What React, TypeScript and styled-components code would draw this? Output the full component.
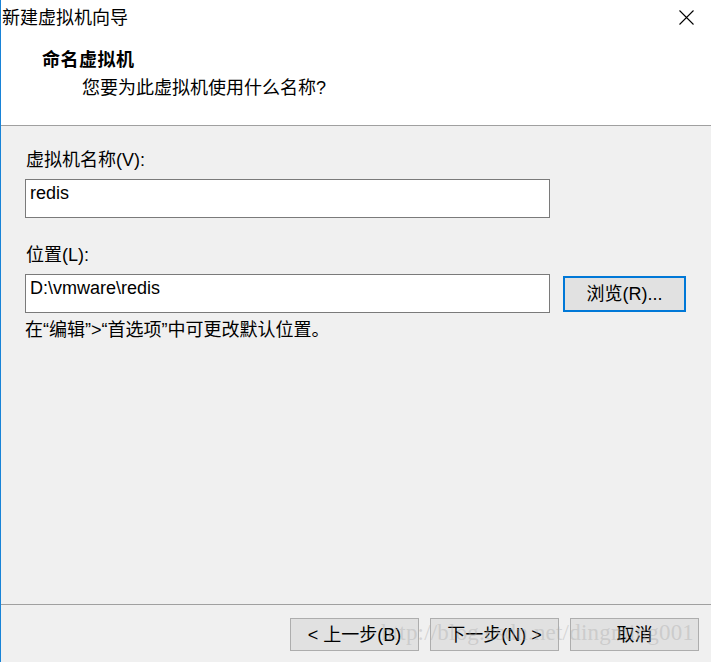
import React from 'react'
import styled, { createGlobalStyle } from 'styled-components'

const GlobalStyle = createGlobalStyle`
html, body {
    margin: 0;
    padding: 0;
    background: #f0f0f0;
}
* {
    box-sizing: border-box;
}
`;

const FONT = `"Liberation Sans", "Noto Sans CJK SC", sans-serif`;

const Window = styled.div`
    position: relative;
    width: 711px;
    height: 662px;
    display: flex;
    flex-direction: column;
    background: #f0f0f0;
    border-left: 1px solid #1883d7;
    font-family: ${FONT};
    font-size: 18px;
    color: #000;
    overflow: hidden;
`;

const Header = styled.div`
    background: #fff;
    height: 126px;
    border-bottom: 1px solid #a0a0a0;
    display: flex;
    flex-direction: column;
`;

const TitleBar = styled.div`
    height: 36px;
    display: flex;
    align-items: center;
    justify-content: space-between;
    padding-left: 1px;
    padding-right: 17px;
`;

const Title = styled.span`
    line-height: 36px;
`;

const Close = styled.div`
    width: 15px;
    height: 15px;
    margin-top: -2px;
    display: flex;
    svg {
        display: block;
    }
`;

const Heading = styled.div`
    margin-top: 12px;
    margin-left: 41px;
    font-weight: bold;
    letter-spacing: 0.5px;
    line-height: 24px;
`;

const SubHeading = styled.div`
    margin-top: 4px;
    margin-left: 81px;
    line-height: 24px;
`;

const Body = styled.div`
    flex: 1;
    padding: 22px 0 0 24px;
    display: flex;
    flex-direction: column;
`;

const Label = styled.div<{ top?: number }>`
    margin-top: ${({ top }) => (top ? top : 0)}px;
    padding-left: 1px;
    line-height: 24px;
`;

const Row = styled.div`
    display: flex;
    align-items: center;
    gap: 13px;
    margin-top: 7px;
`;

const Field = styled.div`
    width: 525px;
    height: 39px;
    background: #fff;
    border: 1px solid #7a7a7a;
    padding: 1px 0 0 4px;
    line-height: 24px;
    white-space: nowrap;
`;

const Button = styled.div<{ focused?: boolean }>`
    width: ${({ focused }) => (focused ? '123px' : '129px')};
    height: ${({ focused }) => (focused ? '36px' : '33px')};
    background: #e1e1e1;
    border: ${({ focused }) => (focused ? '2px solid #0078d7' : '1px solid #adadad')};
    display: flex;
    align-items: center;
    justify-content: center;
    line-height: 24px;
    white-space: nowrap;
`;

const Hint = styled.div`
    margin-top: 5px;
    line-height: 24px;
`;

const Footer = styled.div`
    height: 58px;
    border-top: 1px solid #a0a0a0;
    padding: 13px 12px 0 0;
    display: flex;
    justify-content: flex-end;
    gap: 11px;
`;

const Watermark = styled.div`
    position: absolute;
    left: 380px;
    top: 620px;
    font-family: "Liberation Serif", serif;
    font-size: 23px;
    letter-spacing: 0.2px;
    color: rgba(170, 170, 170, 0.4);
    white-space: nowrap;
    pointer-events: none;
`;

export default function App() {
    return (
        <>
            <GlobalStyle />
            <Window>
                <Header>
                    <TitleBar>
                        <Title>新建虚拟机向导</Title>
                        <Close>
                            <svg width="15" height="15" viewBox="0 0 15 15">
                                <path d="M0.5 0.5 L14.5 14.5 M14.5 0.5 L0.5 14.5" stroke="#000" strokeWidth="1.1" fill="none" />
                            </svg>
                        </Close>
                    </TitleBar>
                    <Heading>命名虚拟机</Heading>
                    <SubHeading>您要为此虚拟机使用什么名称?</SubHeading>
                </Header>
                <Body>
                    <Label>虚拟机名称(V):</Label>
                    <Row>
                        <Field>redis</Field>
                    </Row>
                    <Label top={25}>位置(L):</Label>
                    <Row>
                        <Field>D:\vmware\redis</Field>
                        <Button focused>浏览(R)...</Button>
                    </Row>
                    <Hint>在“编辑”&gt;“首选项”中可更改默认位置。</Hint>
                </Body>
                <Footer>
                    <Button>&lt; 上一步(B)</Button>
                    <Button>下一步(N) &gt;</Button>
                    <Button>取消</Button>
                </Footer>
                <Watermark>http://blog.csdn.net/dingming001</Watermark>
            </Window>
        </>
    )
}
